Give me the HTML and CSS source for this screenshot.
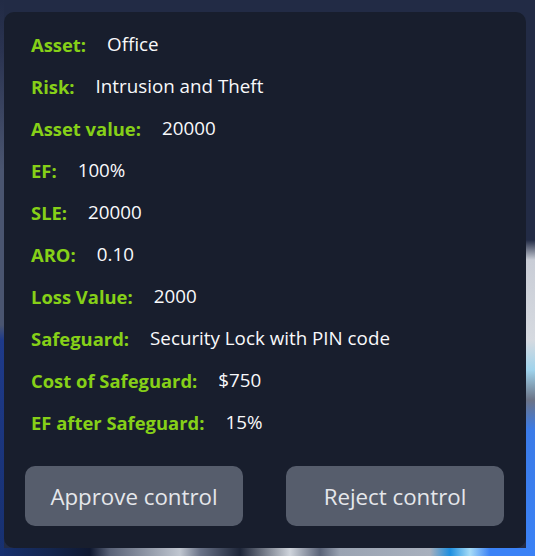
FILE: index.html
```html
<!DOCTYPE html>
<html>
<head>
<meta charset="utf-8">
<link rel="stylesheet" href="styles.css">
</head>
<body>
<div class="panel">
  <div class="rows">
    <div class="row"><span class="label">Asset:</span><span class="value">Office</span></div>
    <div class="row"><span class="label">Risk:</span><span class="value">Intrusion and Theft</span></div>
    <div class="row"><span class="label">Asset value:</span><span class="value">20000</span></div>
    <div class="row"><span class="label">EF:</span><span class="value">100%</span></div>
    <div class="row"><span class="label">SLE:</span><span class="value">20000</span></div>
    <div class="row"><span class="label">ARO:</span><span class="value">0.10</span></div>
    <div class="row"><span class="label">Loss Value:</span><span class="value">2000</span></div>
    <div class="row"><span class="label">Safeguard:</span><span class="value">Security Lock with PIN code</span></div>
    <div class="row"><span class="label">Cost of Safeguard:</span><span class="value">$750</span></div>
    <div class="row"><span class="label">EF after Safeguard:</span><span class="value">15%</span></div>
  </div>
  <div class="actions">
    <button class="btn">Approve control</button>
    <button class="btn">Reject control</button>
  </div>
</div>
</body>
</html>
```
FILE: styles.css
```css
html, body {
  margin: 0;
  padding: 0;
}
body {
  width: 535px;
  height: 556px;
  overflow: hidden;
  font-family: "Open Sans", "Noto Sans", sans-serif;
  box-sizing: border-box;
  padding: 12px 9px 8px 4px;
  background-color: #222b45;
  background-image:
    linear-gradient(180deg, #222b45 0, #2a3350 50px, #4a5570 170px, #4a5570 325px, #1e3a8a 340px, #17306f 556px),
    linear-gradient(180deg, #222b45 0, #222b45 240px, #c9cdd6 260px, #d6dae0 340px, #9fd3ec 370px, #6b7386 400px, #3b7be8 430px, #3b82f6 556px),
    linear-gradient(90deg, #17306f 0, #14264f 50px, #0f1830 90px, #5a6378 110px, #c0c6d0 180px, #6a7388 200px, #1d2538 240px, #cfd4dc 290px, #5a6378 320px, #9aa3b2 340px, #a8b0bd 430px, #1d8fe0 450px, #a7dcf7 470px, #3b82f6 490px);
  background-repeat: no-repeat;
  background-position: 0 0, right 0 top 0, 0 bottom;
  background-size: 4px 100%, 9px 100%, 100% 8px;
}
.panel {
  background: #181e2d;
  border-radius: 10px;
  height: 536px;
  box-sizing: border-box;
  padding: 11px 22px 22px 21px;
  display: flex;
  flex-direction: column;
}
.rows {
  display: flex;
  flex-direction: column;
  padding-left: 6px;
}
.row {
  height: 42px;
  display: flex;
  align-items: center;
  gap: 21px;
  font-size: 18.8px;
}
.label {
  color: #86d018;
  font-weight: 700;
  font-size: 18.4px;
}
.value {
  color: #f8f9fb;
}
.actions {
  margin-top: 23px;
  display: flex;
  justify-content: space-between;
}
.btn {
  width: 218px;
  height: 60px;
  border: none;
  border-radius: 10px;
  background: #565d6c;
  color: #e5e7eb;
  font-family: "Open Sans", "Noto Sans", sans-serif;
  font-size: 22.3px;
  padding: 0;
}
```
